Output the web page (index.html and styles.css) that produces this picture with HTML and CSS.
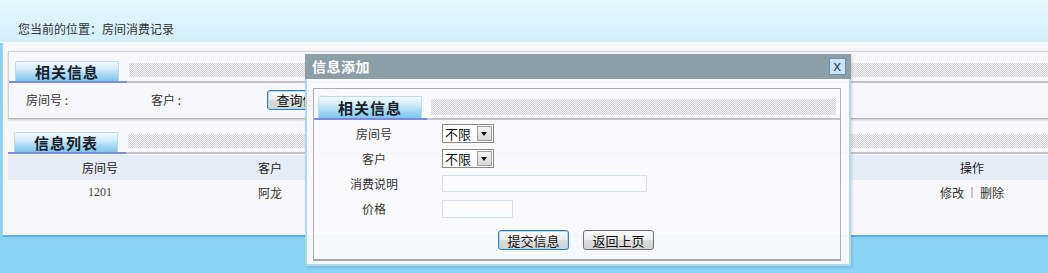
FILE: index.html
```html
<!DOCTYPE html>
<html lang="zh">
<head>
<meta charset="utf-8">
<title>房间消费记录</title>
<link rel="stylesheet" href="styles.css">
</head>
<body>
<div class="crumb">您当前的位置：房间消费记录</div>
<div class="panel">
  <div class="section s1">
    <div class="sec-head">
      <div class="tab-wrap"><div class="tab">相关信息</div></div>
      <div class="dots"></div>
    </div>
    <div class="search-row">
      <span class="lbl l1">房间号 :</span>
      <span class="lbl l2">客户 :</span>
      <button class="btn">查询信息</button>
    </div>
  </div>
  <div class="section s2">
    <div class="sec-head">
      <div class="tab-wrap"><div class="tab">信息列表</div></div>
      <div class="dots"></div>
    </div>
    <div class="grid head">
      <div>房间号</div><div>客户</div><div></div><div></div><div>操作</div><div></div>
    </div>
    <div class="grid row">
      <div class="num">1201</div><div>阿龙</div><div></div><div></div><div class="ops">修改<i class="sep"></i>删除</div><div></div>
    </div>
  </div>
</div>

<div class="dialog">
  <div class="dlg-title">信息添加<span class="close">x</span></div>
  <div class="dlg-body">
    <div class="dlg-section">
      <div class="sec-head">
        <div class="tab-wrap"><div class="tab">相关信息</div></div>
        <div class="dots"></div>
      </div>
      <div class="form">
        <div class="f-lbl">房间号</div>
        <div class="f-ctl"><span class="sel"><span class="sel-txt">不限</span><span class="sel-arrow"></span></span></div>
        <div class="f-lbl">客户</div>
        <div class="f-ctl"><span class="sel"><span class="sel-txt">不限</span><span class="sel-arrow"></span></span></div>
        <div class="f-lbl">消费说明</div>
        <div class="f-ctl"><span class="inp wide"></span></div>
        <div class="f-lbl">价格</div>
        <div class="f-ctl"><span class="inp short"></span></div>
      </div>
      <div class="actions">
        <button class="btn focus">提交信息</button>
        <button class="btn">返回上页</button>
      </div>
    </div>
  </div>
</div>
</body>
</html>
```

FILE: styles.css
```css
html, body {
  margin: 0;
  height: 273px;
  overflow: hidden;
}
body {
  position: relative;
  font-family: "Noto Sans CJK SC", "Noto Sans", sans-serif;
  font-size: 12px;
  color: #333;
  background: linear-gradient(#86cff4, #8bd4f8);
}
.crumb {
  height: 43px;
  box-sizing: border-box;
  padding: 20px 0 0 18px;
  line-height: 17px;
  background: linear-gradient(#e8f7fd, #d2eef9);
  border-bottom: 1px solid #f4fbfe;
}
.panel {
  margin-left: 2px;
  height: 194px;
  box-sizing: border-box;
  background: #f8f8fa;
  border-left: 1px solid #a9d6ef;
  border-bottom: 2px solid #5caee0;
  padding: 8px 0 0 5px;
}
.section.s1 {
  border: 1px solid #d2d2d2;
  border-right: none;
  border-bottom: 1px solid #b4b4b4;
  box-shadow: 0 1px 2px rgba(0,0,0,0.18);
  height: 68px;
  box-sizing: border-box;
  background: #f8f8fa;
}
.sec-head {
  display: flex;
  align-items: flex-end;
  border-bottom: 2px solid #c4c4c6;
  padding-top: 9px;
}
.tab-wrap {
  width: 112px;
  padding-left: 6px;
  border-bottom: 2px solid #7b8ce2;
  margin-bottom: -2px;
  flex: none;
}
.tab {
  width: 104px;
  height: 20px;
  box-sizing: border-box;
  border: 1px solid #b9dbee;
  border-bottom: none;
  border-radius: 2px 2px 0 0;
  background: linear-gradient(#f4fafe, #d4edf9 35%, #a2d6f2 70%, #7fc5ec);
  font-size: 15px;
  font-weight: bold;
  color: #18222c;
  text-align: center;
  line-height: 20px;
  letter-spacing: 1px;
}
.dots {
  flex: 1;
  height: 14px;
  margin: 0 0 4px 2px;
  background: repeating-conic-gradient(#d4d4d6 0 25%, #f5f5f7 0 50%) 0 0 / 2px 2px;
}
.search-row {
  display: flex;
  align-items: center;
  height: 33px;
}
.lbl { color: #333; }
.l1 { margin-left: 17px; width: 125px; }
.l2 { width: 116px; }
.btn {
  font-family: "Noto Sans CJK SC", sans-serif;
  font-size: 13px;
  color: #111;
  height: 20px;
  width: 71px;
  padding: 0;
  line-height: 17px;
  border: 1px solid #707070;
  border-radius: 3px;
  background: linear-gradient(#fafafa, #ececec 50%, #dcdcdc 51%, #d2d2d2);
}
.search-row .btn, .btn.focus {
  border-color: #3a7eb0;
  box-shadow: inset 0 0 0 1px #a6dbf6;
}
.section.s2 {
  margin-top: 4px;
}
.grid {
  display: grid;
  grid-template-columns: 184px 156px 1fr 1fr 100px 26px;
  align-items: center;
  text-align: center;
}
.grid.head {
  margin-top: 1px;
  height: 25px;
  background: #e7edf7;
  color: #222;
}
.grid.row {
  height: 24px;
  background: #f8f8fa;
}
.num {
  font-family: "Liberation Serif", serif;
  font-size: 12px;
  color: #444;
}
.ops { display: flex; justify-content: center; align-items: center; color: #333; }
.sep {
  display: inline-block;
  width: 2px;
  height: 11px;
  background: #c8c8c8;
  margin: 0 7px;
}

/* dialog */
.dialog {
  position: absolute;
  left: 305px;
  top: 54px;
  width: 546px;
  box-shadow: 1px 1px 3px rgba(0,0,0,0.15);
}
.dlg-title {
  position: relative;
  height: 25px;
  line-height: 25px;
  background: #8c9ea6;
  color: #fff;
  font-size: 14px;
  font-weight: bold;
  padding-left: 7px;
  letter-spacing: 0.5px;
}
.close {
  position: absolute;
  right: 5px;
  top: 4px;
  width: 17px;
  height: 17px;
  line-height: 14px;
  box-sizing: border-box;
  border: 1px solid #6d8fb0;
  background: #cfe2f3;
  color: #2c4f7a;
  font-family: "DejaVu Sans", sans-serif;
  font-size: 14px;
  font-weight: normal;
  text-align: center;
}
.dlg-body {
  height: 187px;
  box-sizing: border-box;
  border: 2px solid #b0d8ef;
  border-top: none;
  background: rgba(251, 251, 253, 0.93);
  padding: 9px 8px 3px 6px;
}
.dlg-section {
  height: 100%;
  box-sizing: border-box;
  border: 1px solid #b0b0b2;
  border-bottom: 2px solid #a8a8aa;
  background: rgba(250, 250, 252, 0.5);
}
.dlg-section .sec-head { padding-top: 7px; }
.dlg-section .tab { height: 22px; line-height: 22px; }
.dlg-section .tab-wrap { width: 109px; padding-left: 4px; }
.dlg-section .dots { margin: 0 4px 3px 4px; height: 16px; }
.form {
  display: grid;
  grid-template-columns: 120px 1fr;
  grid-auto-rows: 25px;
  column-gap: 8px;
  align-items: center;
  padding-top: 1px;
}
.f-lbl { text-align: center; color: #333; font-size: 12px; }
.f-ctl { display: flex; align-items: center; }
.sel {
  display: inline-flex;
  align-items: stretch;
  height: 19px;
  width: 52px;
  box-sizing: border-box;
  border: 1px solid #8a8a8a;
  background: #fff;
}
.sel-txt {
  flex: 1;
  font-size: 13px;
  line-height: 17px;
  padding-left: 2px;
  color: #111;
}
.sel-arrow {
  width: 15px;
  margin: 1px;
  box-sizing: border-box;
  border: 1px solid #a0a0a0;
  background: linear-gradient(#f4f4f4, #d8d8d8);
  position: relative;
}
.sel-arrow::after {
  content: "";
  position: absolute;
  left: 3px;
  top: 5px;
  border-left: 3px solid transparent;
  border-right: 3px solid transparent;
  border-top: 4px solid #111;
}
.inp {
  display: inline-block;
  box-sizing: border-box;
  border: 1px solid #d7e1ea;
  background: #fbfcfe;
}
.inp.wide { width: 205px; height: 17px; }
.inp.short { width: 71px; height: 18px; }
.actions {
  display: flex;
  justify-content: center;
  gap: 14px;
  margin-top: 9px;
  padding-right: 2px;
}
.actions .btn { height: 20px; }
```
